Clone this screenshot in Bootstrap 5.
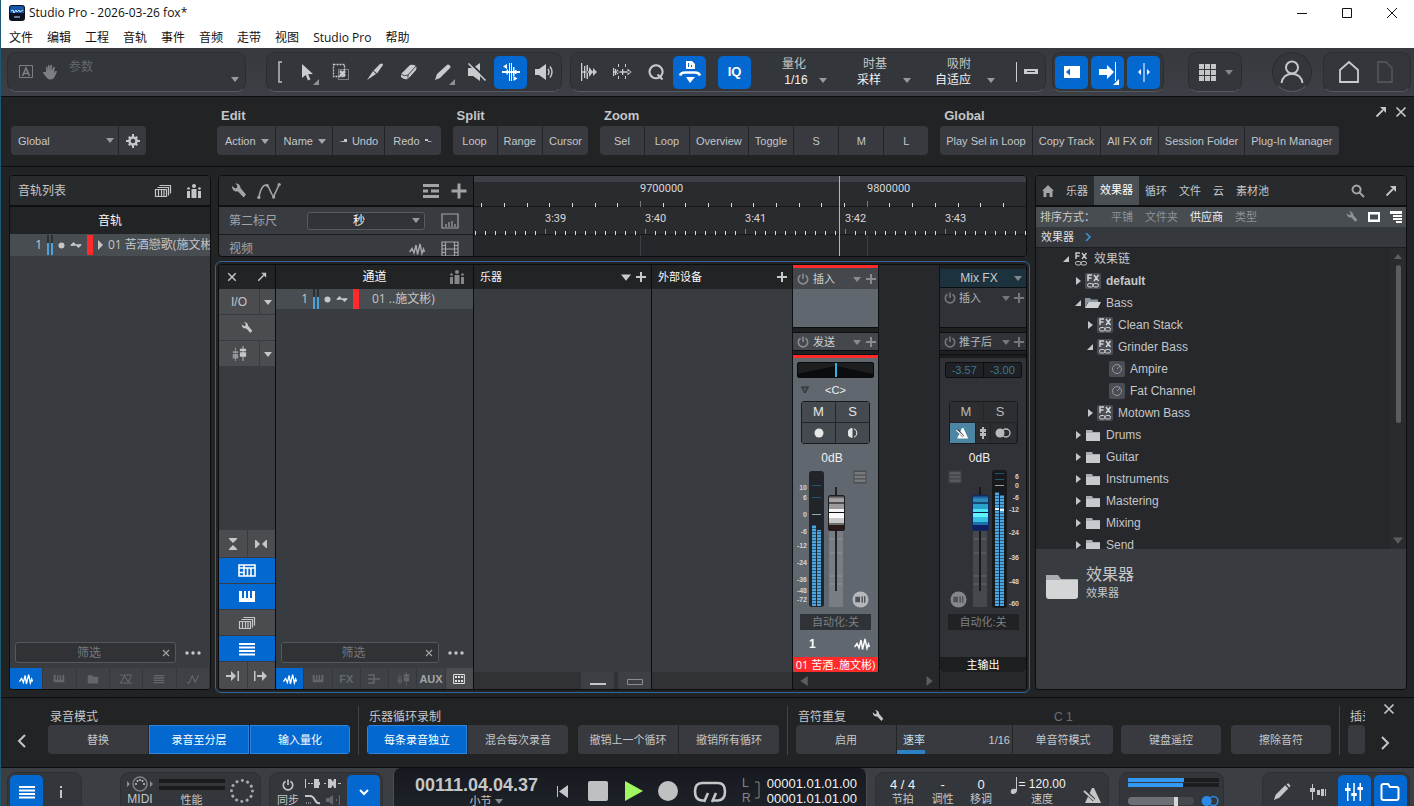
<!DOCTYPE html>
<html lang="zh-CN">
<head>
<meta charset="utf-8">
<meta name="viewport" content="width=device-width, initial-scale=1">
<title>Studio Pro - 2026-03-26 fox*</title>
<link href="https://cdn.jsdelivr.net/npm/bootstrap@5.3.0/dist/css/bootstrap.min.css" rel="stylesheet">
<style>
:root{--blue:#0369d0;--dark:#212325;--panel:#383b40;--bar:#3b3e43;--row:#484d51;--deep:#27282c;--line:#0c0d0f;--txt:#c4c6c8;--dim:#84888c;--red:#ff2a2a}
body{font:12px/16px "Liberation Sans","Noto Sans CJK SC",sans-serif;color:var(--txt);background:var(--dark)}
.app{height:100vh;overflow:hidden;border-left:1px solid #1d5874}
svg{display:block;flex:none;fill:currentColor}
.s8{width:8px;height:8px}.s10{width:10px;height:10px}.s12{width:12px;height:12px}.s14{width:14px;height:14px}.s16{width:16px;height:16px}.s18{width:18px;height:18px}.s20{width:20px;height:20px}.s24{width:24px;height:24px}.s28{width:28px;height:28px}
.segoe{font-family:"Open Sans","Noto Sans CJK SC",sans-serif}
.f11{font-size:11px}
.gl-6{margin-left:6px}.gl-10{margin-left:10px}.gl-12{margin-left:12px}.gl-14{margin-left:14px}.gl-20{margin-left:20px}.gl-30{margin-left:30px}.gl-38{margin-left:38px}.gl-71{margin-left:71px}
.c-dim{color:#84888c}.c-mid{color:#a2a5a8}.c-soft{color:#c8cacc}.c-sky{color:#2b8ae6}
button{color:inherit;background:none;border:0;padding:0;font:inherit;display:inline-flex;align-items:center;justify-content:center;line-height:16px}
select,input[type=text]{font:inherit;color:inherit;background-color:transparent;border:0;appearance:none;outline:0;padding:0}
option{color:#222}
.arrow-down{background-image:url("data:image/svg+xml,%3Csvg xmlns='http://www.w3.org/2000/svg' width='8' height='5'%3E%3Cpath d='M0 0h8L4 5z' fill='%23989b9e'/%3E%3C/svg%3E");background-repeat:no-repeat;background-position:right 4px center}
/* window frame */
.titlebar{background:#fff;color:#111;height:25px;padding-left:8px}
.winbtn{width:45px;height:25px}
.menubar{background:#fff;color:#111;height:23px;padding:3px 0 0 8px;gap:14px}
.menubar a{color:inherit;text-decoration:none}
/* toolbar */
.toolbar{height:49px;background:linear-gradient(#37393e,#3c3f45);border-bottom:1px solid var(--line);padding:0 3px 0 6px}
.well{background:#33363a;border:1px solid #2b2d31;border-bottom-color:#565a5f;border-radius:9px;height:40px}
.tool{width:34px;height:33px;position:relative;color:#c9cbcd}
.tool.on,.key-on{background:var(--blue);color:#fff;border-radius:5px}
.tool.on{width:33px}
.tool .corner{position:absolute;right:4px;bottom:3px}
.tool.wide{width:38px;margin-left:10px}
.tool.iq{margin-left:12px;font-size:13px}
.params{width:239px;padding:0 6px 0 10px;color:#7b7f83}
.params select{width:170px;height:34px;background-position:right 0 top 22px;padding:0 0 10px;color:#63676b}
.drop{margin-left:16px}
.drop select{width:68px;text-align-last:center;color:#f2f2f2;height:16px;padding-right:20px;display:block;background-position:right 2px center}
.drop span{display:block;width:68px;padding-right:8px;text-align:center}
.drop.narrow{margin-left:22px}
.drop.narrow select{width:56px;padding-right:10px}
.drop.narrow span{width:56px;padding-right:14px}
.trio{padding:0 3px 0 2px;gap:3px}
.round{width:40px;border-radius:50%}
.homes{width:88px;margin-left:11px}
/* macros */
.macros{height:69px;padding:9px 7px 0 10px;background:var(--dark)}
.macros h2,.rec h2{margin:0;font-size:13px;line-height:20px;font-weight:bold;padding-left:4px;height:20px}
.keys{display:flex;gap:1px;border-radius:4px;overflow:hidden}
.keys>*{background-color:#383a3f;height:29px}
.keys button{min-width:44px;padding:0 6px;font-size:11px;gap:5px;white-space:nowrap}
.keys button.has-caret{padding:0 6px 0 8px}
.keys button.gear{min-width:27px;padding:0}
.keys.first{margin-top:20px}
.keys .pages{width:107px;font-size:11px;padding-left:7px}
/* panels */
.stage{border-top:1px solid var(--line);padding:8px 7px 4px 8px;min-height:0}
.pane{border:1px solid var(--line);border-radius:4px;overflow:hidden;background:var(--panel)}
.tracks{width:202px;margin-bottom:3px}
.head{height:31px;background:#282b2e;border-bottom:2px solid #0f1012}
.sub{height:27px;background:var(--dark)}
.trk{height:22px;background:var(--row);gap:5px;white-space:nowrap;overflow:hidden}
.trk.short{height:20px}
.trk>*{flex:none}
.trk .num{width:32px;text-align:right}
.tag{width:6px;height:20px;background:var(--red)}
.find{height:21px;border:1px solid #54575b;border-radius:3px;background:#303236;color:#7d8185;padding-right:5px;min-width:0}
.find input{min-width:0;width:10px;flex:1;text-align:center}
.find input::placeholder{color:#74787c;opacity:1}
.findrow{padding:0 9px 5px 5px;gap:9px}
.tabs6>*{flex:1 1 0;height:21px;background:#3e4146;border-right:1px solid #34373b;color:#63676b;font-size:11px}
.tabs6>.key-on{background:var(--blue);color:#fff;border-radius:0}
.tabs6>.aux{color:#a2a5a8}
.tabs6>.lastkey{border:0;background:#4a4c50;color:#e0e0e0}
.centre{min-width:0}
.arrange{height:82px;margin:0 8px 0 7px}
.arrhead{width:255px;border-right:1px solid var(--line)}
.arrhead .head{padding:0 5px 0 12px}
.arrow2{height:28px;padding:0 14px 0 10px;border-bottom:1px solid #1b1c1f;gap:16px}
.unit{width:118px;height:18px;background-color:#303337!important;border:1px solid #575b5f!important;border-radius:3px;text-align-last:center;padding-right:14px!important}
.ruler{background:linear-gradient(#3c4046 0 6px,#2a2b2f 6px);min-width:0}
.ruler svg text{font:11px "Roboto","Liberation Sans",sans-serif;fill:#d8d9da}
.mixwrap{border:1px solid #2f6696;border-radius:6px;padding:2px;margin:4px 5px 0 4px;min-height:0}
.mix{background:var(--line);gap:1px}
.side{width:56px;background:#383b40}
.mixhead{height:24px;background:var(--dark)}
.side .cell{height:25px;background:#4a4c50;margin-bottom:1px}
.side .cell.key-on,.cells>.key-on{background:var(--blue);border-radius:0}
.cells{display:flex;gap:1px;margin-bottom:1px}
.cells>*{height:25px;background:#4a4c50}
.cells.tall>*{height:27px}
.cells .mini{width:15px}
.chan{width:197px;background:var(--panel)}
.inst{width:177px;background:var(--panel)}
.ext{width:140px;background:var(--panel)}
.foot{height:17px;background:#303236;gap:4px}
.foot span{width:33px;height:17px;background:#3c3f43}
.strips{background:#27282c;min-width:0}
.strip{width:85px;outline:1px solid #101113}
.strip .slot{height:20px;padding:0 1px 0 4px;font-size:11px;color:#888c90;gap:4px}
.strip .slot span{color:#d0d2d4}
.strip .slot.tall{height:21px}.strip .slot.low{height:17px}
.lit{background:#60676f}.lit .slot{background:#44484c}
.space38{height:38px}.space19{height:19px}
.redbar{height:3px;background:var(--red)}
.redbar.off{background:#1b1c1e}
.sep{height:6px;background:#1f2022;border-top:1px solid #0d0e0f;border-bottom:1px solid #0d0e0f}
.sep.thin{height:5px}
.pan{display:block;width:77px;height:16px;margin:4px auto 0;border:1px solid #08090a;border-radius:2px;appearance:none;background:linear-gradient(168deg,#1d1e20 49%,#0b0c0d 50%) left/50% 100% no-repeat,linear-gradient(192deg,#1d1e20 49%,#0b0c0d 50%) right/50% 100% no-repeat}
.pan::-webkit-slider-thumb{appearance:none;width:2px;height:14px;background:#28b4e6}
.peaks{width:77px;height:16px;margin:4px auto 0;border:1px solid #0d0e0f;border-radius:2px;background:#1f2124;color:#3d7690;font-size:11px;line-height:14px}
.peaks span{width:50%;text-align:center}.peaks span+span{border-left:1px solid #0d0e0f}
.centretext{height:23px;color:#f0f0f0;font-size:11px}
.ms{width:69px;margin:0 auto;background:#232528;border:1px solid #1a1b1d;border-radius:3px;gap:1px;display:flex;flex-wrap:wrap}
.ms button{width:33px;height:20px;background:#454a50;color:#e6e6e6;font-size:13px}
.dimstrip .ms button{background:#2c2e32;color:#b8babc}
.dimstrip .ms .teal{background:#4c86a3;color:#fff;width:25px}
.dimstrip .ms .n14{width:14px}.dimstrip .ms .n25{width:25px}
.db{height:25px;padding:3px 7px 0 0;text-align:center;font-size:12px;line-height:22px;color:#f0f0f0}
.faderbox{position:relative;width:85px;height:140px}
.faderbox text{font:bold 7px "Liberation Sans",sans-serif;fill:#d0d2d4}
.fader{position:absolute;width:103px;height:17px;left:-8px;top:61px;margin:0;appearance:none;background:none;transform:rotate(-90deg)}
.fader::-webkit-slider-thumb{appearance:none;width:36px;height:17px;border:1px solid #1c1d1f;border-radius:2px;background:linear-gradient(90deg,#2b1818 0 5px,#6d6d6d 5px 7px,#c8c8c8 7px 12px,#fafafa 12px 17px,#111 17px 18px,#f4f4f4 18px 21px,#9b9b9b 21px 26px,#4e4e4e 26px 28px,#a5a5a5 28px 31px,#3a3a3a)}
.fader.master{left:-11px}
.fader.master::-webkit-slider-thumb{border-color:#102a66;background:linear-gradient(90deg,#101f62 0 5px,#1c70a8 5px 8px,#38c0e0 8px 13px,#5ff2ff 13px 17px,#08203a 17px 18px,#4fe4f4 18px 21px,#2aa0cd 21px 26px,#16496f 26px 28px,#2e8bbb 28px 31px,#15407a)}
.auto{width:71px;height:16px;margin:5px auto 0;background:#2f3236;color:#7c8084;font-size:11px;display:flex}
.dimstrip{width:86px;background:#303237}.dimstrip .auto{background:#212224}
.dimstrip .slot,.dimstrip .slot.low{color:#73777b;gap:3px}.dimstrip .slot span{color:#b5b7b9}
.mixfx{height:23px;background:#1c323e;border-top:4px solid #1f2022;border-bottom:1px solid #0d0e0f;padding:0 4px}
.name{height:15px;font-size:11px;color:#fff;background:var(--red);border-radius:0 0 4px 4px;white-space:nowrap}
.dimstrip .name{background:#1d1e20}
.scrollrow{height:17px;background:#27282c;color:#5b5d61;padding:0 6px}
/* browser */
.browser{width:372px;margin-bottom:3px;font-size:11px}
.browser .head{padding:0 9px 0 6px}
.browser .head a,.sortrow a{color:inherit;text-decoration:none}
.browser .head .cur{background:#4b5054;color:#fff;height:29px;line-height:29px;width:45px;text-align:center;margin-left:6px}
.sortrow{height:20px;background:var(--row);padding:0 4px;color:#8e9296}
.sortrow .picked{color:#f0f0f0}
.crumb{height:21px;background:#35383c;padding-left:5px;border-bottom:1px solid #1c1d1f;color:#e0e0e0}
.tree{background:var(--deep);height:301px;min-height:0;overflow:hidden;font-size:12px;line-height:12px}
.tree li{height:22px;gap:5px;display:flex;align-items:center}
.tree li>.s8{margin-right:-2px}
.l1{padding-left:26px}.l2{padding-left:38px}.l3{padding-left:50px}.l4{padding-left:73px}
.sbar{width:16px;background:#2a2b2e;padding:5px 0 4px;color:#5b5d61}
.thumb{width:5px;height:158px;border-radius:3px;background:#5b5d61}
.chip{background:#4a4e54;border-radius:2px;color:#d0d2d4}
.bigname{font-size:16px;line-height:20px}
/* recording */
.rec{height:70px;border-top:1px solid var(--line);background:var(--dark);padding:0 0 0 10px;overflow:hidden}
.rec h2{font-weight:normal;font-size:12px;padding-left:2px;height:19px;line-height:22px}
.rec .keys button{width:100px;flex:none}
.rec .keys .key-on{background:var(--blue);border-radius:0;border:1px solid #2d84dc}
.recbody{padding-top:8px;min-width:0}
.goleft{width:22px;height:86px;margin-right:15px}
.recend{width:49px;padding:5px 10px 0 0;gap:20px}
.rule{width:1px;height:49px;background:#414447;margin:0 8px}
.rep{width:76px}
.note{margin-left:170px;color:#6b6f73;line-height:22px;height:19px}
.cutoff{width:17px;overflow:hidden}
.rate{width:115px;position:relative;padding:0 2px 0 6px;color:#bfe0f5;font-size:11px}
.rate i{position:absolute;left:0;bottom:0;width:28px;height:4px;background:#2a81c4}
/* transport */
.transport{height:39px;overflow:hidden;border-top:1px solid var(--line);background:var(--bar);padding:0 4px 0 6px;align-items:flex-start}
.transport .well{height:50px;margin-top:4px;border-color:#2d2f33;align-items:flex-start;padding:2px;flex:none;display:flex;justify-content:space-between}
.transport .info{width:75px}.transport .perf{width:141px;padding:2px 4px}.transport .sync{width:114px}.transport .song{width:234px;padding:4px 6px 0 14px}.transport .out{width:105px;padding:5px 4px 0 8px;display:block}.transport .views{width:148px;gap:2px}
.tkey{width:33px;height:34px}
.screen{flex:1;min-width:0;height:50px;margin:0 8px 0 10px;padding-left:12px;background:linear-gradient(#16191f,#20242b);border:1px solid #4a4d52;border-radius:7px;border-top:0}
.screen>button{margin:13px 0 0 15px}
.screen>div{padding-top:7px}
.clock{font-size:18px;font-weight:bold;line-height:20px}
.beats{font-size:11px;line-height:12px;padding-left:20px}
.screen>.loc{margin-left:15px;line-height:15px;padding-top:8px}.loc b{font-weight:normal;font-size:13px;color:#f2f2f2}
.pair{text-align:center;line-height:15px}
.pair b{font-weight:normal;color:#f2f2f2;display:block;font-size:13px;white-space:nowrap}
.pair b.tempo{font-size:12px}
.pair span{font-size:11px;display:block}
.pair .midi{font-size:12px}
.powered{padding:4px 0 0 5px;gap:2px}
.load{width:66px;padding-top:4px;font-size:11px;line-height:15px;text-align:center}
.bar1{height:4px;background:#1b1c1e;margin-bottom:1px}.bar1 i{display:block;height:4px;background:#3399f5}
.load .bar1{margin-bottom:3px}
.vol{appearance:none;display:block;width:66px;height:8px;margin:0;border-radius:4px;background:linear-gradient(90deg,#6c7074 48px,#45484c 48px)}
.vol::-webkit-slider-thumb{appearance:none;width:4px;height:9px;background:#d8d8d8}
</style>
</head>
<body>
<svg class="d-none" aria-hidden="true">
<symbol id="caret" viewBox="0 0 8 8"><path d="M0 2h8L4 7z"/></symbol>
<symbol id="tri" viewBox="0 0 8 8"><path d="M2 0l5 4-5 4z"/></symbol>
<symbol id="open" viewBox="0 0 8 8"><path d="M7 1v6H1z"/></symbol>
<symbol id="up" viewBox="0 0 8 8"><path d="M4 1l4 5H0z"/></symbol>
<symbol id="lft" viewBox="0 0 8 8"><path d="M7 0v8L1 4z"/></symbol>
<symbol id="corner" viewBox="0 0 8 8"><path d="M7 1v6H1z" fill="#8d9094"/></symbol>
<symbol id="plus" viewBox="0 0 12 12"><path d="M5 1h2v4h4v2H7v4H5V7H1V5h4z"/></symbol>
<symbol id="x" viewBox="0 0 12 12"><path d="M1.500 1.500l9 9m0-9l-9 9" fill="none" stroke="currentColor" stroke-width="1.700"/></symbol>
<symbol id="pop" viewBox="0 0 12 12"><path d="M1.500 10.500L8 4" stroke="currentColor" stroke-width="1.800"/><path d="M5 1h6v6z"/></symbol>
<symbol id="wrench" viewBox="0 0 16 16"><path d="M1 3l3.200 2.500 2-1L6 2 4 .5C7 0 9.500 1.800 9.500 5l5.500 6.500-2.300 3L7 8.500C4 9 1 7.500 1 3z"/></symbol>
<symbol id="people" viewBox="0 0 16 16"><circle cx="8" cy="3" r="2"/><circle cx="2.500" cy="5.500" r="1.300"/><circle cx="13.500" cy="5.500" r="1.300"/><path d="M5.500 6h5v9h-5zM1 8h3v7H1zM12 8h3v7h-3z"/></symbol>
<symbol id="stack" viewBox="0 0 18 14"><path d="M1.500 5.500h11v7h-11zM4.500 6v6M7.500 6v6M10 6v6M3.500 3.500h11v8M5.500 1.500h11v8" fill="none" stroke="currentColor" stroke-width="1.200"/></symbol>
<symbol id="pulse" viewBox="0 0 16 14"><path d="M.5 10L3 6.500 5 11 7 3l1.500 9.500L11 2l2 9.500L14.500 7l1 3" fill="none" stroke="currentColor" stroke-width="1.500"/></symbol>
<symbol id="piano" viewBox="0 0 18 14"><path d="M1 1h3v7h2V1h2v7h2V1h2v7h2V1h3v11H1z"/></symbol>
<symbol id="folder" viewBox="0 0 16 14"><path d="M1 2h6l1 2h7v9H1z"/></symbol>
<symbol id="autom" viewBox="0 0 18 14"><path d="M1 2h16M1 12h16M2 12l5-9 5 8 4-8" fill="none" stroke="currentColor" stroke-width="1.300"/></symbol>
<symbol id="lines" viewBox="0 0 18 14"><path d="M1 1h16v2H1zM1 4.500h16v2H1zM1 8h16v2H1zM1 11.500h16v2H1z"/></symbol>
<symbol id="zig" viewBox="0 0 18 14"><path d="M1 12h3l4-9 4 8 4-9" fill="none" stroke="currentColor" stroke-width="1.400"/></symbol>
<symbol id="curve" viewBox="0 0 26 18"><path d="M2 16C4 5 8 1 11 3s3 8 7 12L24 2" fill="none" stroke="currentColor" stroke-width="1.700"/><circle cx="2" cy="16" r="1.800"/><circle cx="11" cy="3" r="1.600"/><circle cx="18" cy="15.500" r="1.800"/><circle cx="24" cy="2" r="1.800"/></symbol>
<symbol id="tlist" viewBox="0 0 18 14"><path d="M1 0h16v3H1zM1 5.500h5v3H1zM9 5.500h8v3H9zM1 11h16v3H1z"/></symbol>
<symbol id="meter" viewBox="0 0 6 20"><path fill="#2d3034" d="M0 0h2v20H0zM4 0h2v20H4z"/><path fill="#4ba3dc" d="M0 8h2v12H0zM4 8h2v12H4z"/></symbol>
<symbol id="dot" viewBox="0 0 7 7"><circle cx="3.500" cy="3.500" r="3"/></symbol>
<symbol id="mono" viewBox="0 0 12 8"><path d="M0 4.500L3.500 1 6 3.500 3 4.500zM6 4.500l3-1h3L8.500 7z"/><path d="M1 4h10" stroke="currentColor" stroke-width="1.400"/></symbol>
<symbol id="power" viewBox="0 0 12 12"><path d="M3.500 2.200a4.700 4.700 0 1 0 5 0M6 .5V6" fill="none" stroke="currentColor" stroke-width="1.600"/></symbol>
<symbol id="pencil" viewBox="0 0 20 20"><path d="M1 19l2-6L13.500 2.500l3.500 3.500L7 16.500zM15 1.500L17 .3 19.500 3 18 5z"/></symbol>
<symbol id="fx" viewBox="0 0 16 16"><path d="M3 8V2h4M3 5h3.500M9 2l4.500 6m0-6L9 8" fill="none" stroke="currentColor" stroke-width="1.500"/><rect x="2.500" y="10.500" width="5.500" height="3.500" rx="1.700" fill="none" stroke="currentColor"/><rect x="8" y="10.500" width="5.500" height="3.500" rx="1.700" fill="none" stroke="currentColor"/></symbol>
<symbol id="knob" viewBox="0 0 16 16"><circle cx="8" cy="8" r="4.500" fill="none" stroke="#94989c"/><path d="M8 8l3-3" stroke="#94989c"/></symbol>
<symbol id="fold" viewBox="0 0 16 14"><path d="M1 2h6l1 2h7v9H1z" fill="#a9adb1"/><path d="M1 5h14v8H1z" fill="#c7cacd"/></symbol>
<symbol id="foldopen" viewBox="0 0 16 14"><path d="M0 2h5l1 1.500h7V6H3l-3 6z" fill="#8c959d"/><path d="M3.500 6H16l-3 6H0z" fill="#d0d3d6"/></symbol>
<symbol id="metro" viewBox="0 0 20 18"><path d="M10 2h2l7 15H3z"/><path d="M3 5l9 9" stroke="#33363a" stroke-width="3.500"/><path d="M2 5l10 9" stroke="currentColor" stroke-width="1.800"/></symbol>
<symbol id="twofader" viewBox="0 0 18 18"><path d="M2 6h6v2H2zM2 9h6v5H2zM4.500 2h1v15h-1z" opacity=".6"/><path d="M10 3h7v3h-7zM10 7h7v5h-7zM13 0h1v17h-1z"/></symbol>
<symbol id="stereo" viewBox="0 0 16 12"><circle cx="5" cy="6" r="4.500"/><circle cx="11" cy="6" r="4" fill="none" stroke="currentColor" stroke-width="1.400"/></symbol>
<symbol id="listv" viewBox="0 0 14 14"><path d="M.5.500h13v13H.5z" fill="#4c4f53"/><path d="M1.500 2h11v2.500h-11zM1.500 5.700h11v2.500h-11zM1.500 9.500h11V12h-11z" fill="#777a7d"/></symbol>
<symbol id="tocircle" viewBox="0 0 18 18"><circle cx="9" cy="9" r="8.500"/><path d="M3.500 6h5v6h-5zM10 5.500h1.500v7H10zM12.700 5.500h1.500v7h-1.500z" fill="#4d5258"/></symbol>
</svg>

<div class="app d-flex flex-column">
<header class="titlebar d-flex align-items-center segoe">
 <svg class="s16" viewBox="0 0 16 16"><rect width="16" height="16" rx="3" fill="#0b1222"/><path d="M1 8V3q0-2 2-2h10q2 0 2 2v5z" fill="#1257a8"/><path d="M2 6l2-1 1 3 2-3 1 2 2-2 1 2 3-2M5 12h6" stroke="#cfe6ff" fill="none"/></svg>
 <span class="ms-1">Studio Pro - 2026-03-26 fox*</span>
 <div class="ms-auto d-flex">
  <button class="winbtn" aria-label="最小化"><svg class="s12" viewBox="0 0 12 12"><path d="M1 6h10v1H1z"/></svg></button>
  <button class="winbtn" aria-label="最大化"><svg class="s12" viewBox="0 0 12 12"><path d="M1.500 1.500h9v9h-9z" fill="none" stroke="currentColor"/></svg></button>
  <button class="winbtn" aria-label="关闭"><svg class="s12" viewBox="0 0 12 12"><path d="M1 1l10 10M11 1L1 11" stroke="currentColor"/></svg></button>
 </div>
</header>
<nav class="menubar d-flex align-items-center segoe">
 <a href="#">文件</a><a href="#">编辑</a><a href="#">工程</a><a href="#">音轨</a><a href="#">事件</a><a href="#">音频</a><a href="#">走带</a><a href="#">视图</a><a href="#">Studio Pro</a><a href="#">帮助</a>
</nav>

<div class="toolbar d-flex align-items-center">
 <div class="well params d-flex align-items-center">
  <svg class="s16" viewBox="0 0 16 16"><path d="M1.500 1.500h13v12h-13z" fill="none" stroke="currentColor"/><path d="M4.500 12L8 4l3.500 8M6 9.500h4" fill="none" stroke="currentColor" stroke-width="1.700"/></svg>
  <svg class="s16 ms-2" viewBox="0 0 16 16"><path d="M4 8V3q1-1 1.500 0L6 7V1.500q1-1 1.600 0V7l.8-6q1-.7 1.600.3L9.700 7l1.600-4q1-.6 1.500.4L12 9l1.500-2q1.500-.3 1.500.8L12 14q-4 3-7 0L1 9q0-1.500 1.500-1z"/></svg>
  <select class="arrow-down ms-auto" aria-label="参数"><option>参数</option></select>
 </div>
 <div class="well d-flex align-items-center gl-20">
  <svg width="23" height="26" viewBox="0 0 23 26"><path d="M15 3h-3v20h3" fill="none" stroke="#b9bbbe" stroke-width="1.500"/></svg>
  <button class="tool" aria-label="选择"><svg class="s20" viewBox="0 0 20 20"><path d="M5 2l11 10-5 .3 2.500 5-2.500 1.200L8.700 13 5 16z"/></svg><svg class="s8 corner"><use href="#corner"/></svg></button>
  <button class="tool" aria-label="范围"><svg class="s20" viewBox="0 0 20 20"><path d="M2.500 2.500h11v12h-11z" fill="none" stroke="currentColor" stroke-width="1.300" stroke-dasharray="2 1"/><path d="M7.500 7.500h10v10h-10z" fill="none" stroke="currentColor" stroke-dasharray="1 1"/><path d="M9 9l5 5m0-5l-5 5" stroke="currentColor" stroke-width="2.500"/></svg></button>
  <button class="tool" aria-label="切割"><svg class="s20" viewBox="0 0 20 20"><path d="M2 18L8 9l3 3zM8.500 8.500L15 2q3-1.500 3 1l-6 8.500z"/></svg></button>
  <button class="tool" aria-label="橡皮"><svg class="s20" viewBox="0 0 20 20"><path d="M2 12L11 3q3-1 6 1 1 2 0 4L9 17q-4 1-7-2z"/><path d="M2 12q3 3 7 1l8-9M9 13v4" fill="none" stroke="#45484c"/></svg></button>
  <button class="tool" aria-label="绘画"><svg class="s20" viewBox="0 0 20 20"><path d="M2 18l2-6L14.500 2.500q3 0 3 3L7 16z"/></svg><svg class="s8 corner"><use href="#corner"/></svg></button>
  <button class="tool" aria-label="静音"><svg class="s20" viewBox="0 0 20 20"><path d="M1 6h5l7-5v18l-7-5H1z"/><path d="M3 1l17 16" stroke="#33363a" stroke-width="2"/><path d="M1.500 1.500l17 17" stroke="currentColor" stroke-width="1.600"/></svg></button>
  <button class="tool on" aria-label="弯折"><svg class="s20" viewBox="0 0 20 20"><path d="M1 9h18v2H1zM8 1h1v18H8zM10 1h1v18h-1zM12 5h1.500v10H12zM14 8h1.500v4H14zM6 2v5L2 4.500zM12.500 14v5l4-2.500zM5.500 7.500H7v5H5.500z"/></svg></button>
  <button class="tool" aria-label="监听"><svg class="s20" viewBox="0 0 20 20"><path d="M1 7h4l7-5v16l-7-5H1z"/><path d="M14 7q2 3 0 6M16 4.500q4 5.500 0 11" fill="none" stroke="currentColor" stroke-width="1.400"/></svg></button>
 </div>
 <div class="well d-flex align-items-center ms-2">
  <button class="tool" aria-label="起始量化"><svg class="s20" viewBox="0 0 20 20"><path d="M3 1h1.300v18H3zM6 4h1.300v12H6zM8.500 3v14H10V3zM3 9.300h12v1.400H3zM11 5l4 5-4 5zM15 6l4 4-4 4z"/></svg></button>
  <button class="tool" aria-label="伸缩"><svg class="s20" viewBox="0 0 20 20"><path d="M2 9.300h16v1.400H2zM1 6h1.300v8H1zM3 7h1.300v6H3zM10 7h1.300v6H10zM19.500 10l-4-3.500v7zM8 10L5 7.500v5z"/><path d="M6.500 2v4m0 8v4M13.500 2v4m0 8v4" stroke="currentColor" stroke-dasharray="3 1"/></svg></button>
  <button class="tool" aria-label="量化"><svg class="s20" viewBox="0 0 20 20"><path d="M10 3.200a6.500 6.500 0 1 0 .1 0zM11.500 12.500l5 5" fill="none" stroke="currentColor" stroke-width="2"/></svg></button>
  <button class="tool on" aria-label="自动滚动"><svg class="s28" viewBox="0 0 28 28"><path d="M10 3h6l3 3v5h-9z"/><path d="M12 5h1v4h-1zM15 7h1v2h-1z" fill="#0369d0"/><path d="M4 17.500Q5 14.500 9 14.500H19Q23 14.500 24 17.500" fill="none" stroke="currentColor" stroke-width="2.600"/><path d="M10 19h9l-5 6z"/></svg></button>
  <button class="tool on iq fw-bold">IQ</button>
  <label class="drop narrow"><span>量化</span><select class="arrow-down"><option>1/16</option></select></label>
  <label class="drop"><span>时基</span><select class="arrow-down"><option>采样</option></select></label>
  <label class="drop"><span>吸附</span><select class="arrow-down"><option>自适应</option></select></label>
  <button class="tool wide" aria-label="插入"><svg class="s28" viewBox="0 0 28 28"><path d="M4 4h1v20H4zM12 11h14v5H12zM15 13v1h8v-1z" fill-rule="evenodd"/></svg></button>
 </div>
 <div class="well trio d-flex align-items-center gl-6">
  <button class="tool on" aria-label="光标"><svg class="s20" viewBox="0 0 20 20"><path d="M2 4h16v12H2zM8 6.500L4 10l4 3.500z" fill-rule="evenodd"/></svg></button>
  <button class="tool on" aria-label="跟随"><svg class="s20" viewBox="0 0 20 20"><path d="M1 7h8V3l7 7-7 7v-4H1zM17 0h1v19h-1z"/></svg><svg class="s8 corner" viewBox="0 0 8 8"><path d="M7 1v6H1z"/></svg></button>
  <button class="tool on" aria-label="居中"><svg class="s20" viewBox="0 0 20 20"><path d="M9.500 1h1v19h-1zM7 7v6l-3-3zM13 7v6l3-3z"/></svg></button>
 </div>
 <button class="well px-2 ms-auto gap-2" aria-label="面板"><svg class="s20" viewBox="0 0 20 20"><path d="M2 2h5v5H2zM8 2h5v5H8zM14 2h5v5h-5zM2 8h5v5H2zM8 8h5v5H8zM14 8h5v5h-5zM2 14h5v5H2zM8 14h5v5H8zM14 14h5v5h-5z"/></svg><svg class="s8 c-dim"><use href="#caret"/></svg></button>
 <button class="well round gl-30" aria-label="用户"><svg class="s24" viewBox="0 0 24 24"><circle cx="12" cy="7.500" r="6" fill="none" stroke="currentColor" stroke-width="2"/><path d="M1.500 23Q3 14 12 13.700 21 14 22.500 23" fill="none" stroke="currentColor" stroke-width="2"/></svg></button>
 <div class="well homes d-flex align-items-center justify-content-between px-2">
  <button class="tool" aria-label="起始页"><svg class="s24" viewBox="0 0 24 24"><path d="M3 10l9-8 9 8v12H3z" fill="none" stroke="currentColor" stroke-width="1.800"/></svg></button>
  <button class="tool" aria-label="文档"><svg class="s24" viewBox="0 0 24 24"><path d="M5 2h8l6 6v14H5z" fill="none" stroke="#4f5256" stroke-width="1.800"/></svg></button>
 </div>
</div>

<section class="macros d-flex align-items-start">
 <div class="keys first"><select class="arrow-down pages" aria-label="宏页面"><option>Global</option></select><button class="gear" aria-label="设置"><svg class="s14" viewBox="0 0 14 14"><path d="M6 0h2v14H6zM0 6h14v2H0z" /><path d="M2 3.500L3.500 2 12 10.500 10.500 12zM10.500 2L12 3.500 3.500 12 2 10.500z"/><circle cx="7" cy="7" r="3.600" fill="none" stroke="currentColor" stroke-width="2.500"/><circle cx="7" cy="7" r="2.300" fill="#383a3f"/></svg></button></div>
 <div class="gl-71"><h2>Edit</h2><div class="keys"><button class="has-caret">Action <svg class="s8 c-mid"><use href="#caret"/></svg></button><button class="has-caret">Name <svg class="s8 c-mid"><use href="#caret"/></svg></button><button><svg class="s8" viewBox="0 0 8 8"><path d="M0 5l4-1h4v1zM5 2h3v3H5z"/></svg>Undo</button><button class="px-2">Redo<svg class="s8" viewBox="0 0 8 8"><path d="M8 5L4 4H0v1zM0 2h3v3H0z"/></svg></button></div></div>
 <div class="gl-12"><h2>Split</h2><div class="keys"><button>Loop</button><button>Range</button><button>Cursor</button></div></div>
 <div class="gl-12"><h2>Zoom</h2><div class="keys"><button>Sel</button><button>Loop</button><button>Overview</button><button>Toggle</button><button>S</button><button>M</button><button>L</button></div></div>
 <div class="gl-12"><h2>Global</h2><div class="keys"><button>Play Sel in Loop</button><button>Copy Track</button><button>All FX off</button><button>Session Folder</button><button>Plug-In Manager</button></div></div>
 <div class="ms-auto d-flex gap-2"><button aria-label="弹出"><svg class="s12"><use href="#pop"/></svg></button><button aria-label="关闭宏"><svg class="s12"><use href="#x"/></svg></button></div>
</section>

<main class="stage d-flex flex-grow-1">
 <section class="pane tracks d-flex flex-column flex-shrink-0">
  <div class="head d-flex align-items-center px-2"><span>音轨列表</span><svg class="s18 ms-auto"><use href="#stack"/></svg><svg class="s16 gl-14"><use href="#people"/></svg></div>
  <div class="sub d-flex align-items-center justify-content-center text-light">音轨</div>
  <div class="trk d-flex align-items-center segoe"><span class="num">1</span><svg width="6" height="20"><use href="#meter"/></svg><svg width="7" height="7"><use href="#dot"/></svg><svg width="12" height="8"><use href="#mono"/></svg><span class="tag"></span><svg width="5" height="10" viewBox="0 0 5 10"><path d="M0 0l5 5-5 5z"/></svg><span>01 苦酒戀歌(施文彬)</span></div>
  <div class="findrow mt-auto d-flex align-items-center"><label class="find d-flex align-items-center flex-grow-1"><input type="text" placeholder="筛选" aria-label="筛选音轨"><svg class="s8 c-mid"><use href="#x"/></svg></label><svg width="16" height="4" viewBox="0 0 16 4"><circle cx="2" cy="2" r="1.700"/><circle cx="8" cy="2" r="1.700"/><circle cx="14" cy="2" r="1.700"/></svg></div>
  <div class="tabs6 d-flex"><button class="key-on" aria-label="音频"><svg class="s14"><use href="#pulse"/></svg></button><button aria-label="乐器"><svg class="s12"><use href="#piano"/></svg></button><button aria-label="文件夹"><svg class="s12"><use href="#folder"/></svg></button><button aria-label="自动化"><svg class="s14"><use href="#autom"/></svg></button><button aria-label="列表"><svg class="s12"><use href="#lines"/></svg></button><button aria-label="包络"><svg class="s14"><use href="#zig"/></svg></button></div>
 </section>

 <div class="centre d-flex flex-column flex-grow-1">
  <section class="pane arrange d-flex flex-shrink-0">
   <div class="arrhead flex-shrink-0">
    <div class="head d-flex align-items-center c-mid"><svg class="s16"><use href="#wrench"/></svg><svg width="24" height="18" class="gl-10"><use href="#curve"/></svg><svg class="s18 ms-auto"><use href="#tlist"/></svg><svg class="s18 gl-10"><use href="#plus"/></svg></div>
    <div class="arrow2 d-flex align-items-center c-mid"><label for="unit">第二标尺</label><select id="unit" class="unit arrow-down ms-auto text-light"><option>秒</option></select><svg width="18" height="16" viewBox="0 0 18 16"><path d="M1 1h16v14H1zM5 14v-3M8 14V9M11 14V8M14 14v-3" fill="none" stroke="currentColor" stroke-width="1.200"/></svg></div>
    <div class="arrow2 d-flex align-items-center border-0 c-mid"><span>视频</span><svg class="s16 ms-auto"><use href="#pulse"/></svg><svg width="18" height="16" viewBox="0 0 18 16"><path d="M1 1h16v14H1zM4.500 1v14M13.500 1v14M4.500 8h9M1 4.500h3M1 8h3M1 11.500h3M14 4.500h3M14 8h3M14 11.500h3" fill="none" stroke="currentColor" stroke-width="1.200"/></svg></div>
   </div>
   <div class="ruler flex-grow-1"><svg id="timeline" width="100%" height="80" role="img" aria-label="时间标尺"></svg></div>
  </section>

  <section class="mixwrap flex-grow-1 d-flex">
   <div class="pane mix d-flex flex-grow-1">
    <div class="side d-flex flex-column flex-shrink-0">
     <div class="mixhead d-flex align-items-center justify-content-between px-2 flex-shrink-0"><button aria-label="关闭混音器"><svg class="s10"><use href="#x"/></svg></button><button aria-label="弹出混音器"><svg class="s10"><use href="#pop"/></svg></button></div>
     <div class="cells"><button class="flex-grow-1">I/O</button><button class="mini" aria-label="I/O 菜单"><svg class="s8"><use href="#caret"/></svg></button></div>
     <button class="cell" aria-label="设置"><svg class="s12"><use href="#wrench"/></svg></button>
     <div class="cells"><button class="flex-grow-1" aria-label="推子"><svg class="s16"><use href="#twofader"/></svg></button><button class="mini" aria-label="推子菜单"><svg class="s8"><use href="#caret"/></svg></button></div>
     <div class="cells tall mt-auto"><button class="flex-fill" aria-label="垂直"><svg class="s14" viewBox="0 0 14 14"><path d="M3 1h8v1L7 6 3 2zM3 13h8v-1L7 8l-4 4z"/></svg></button><button class="flex-fill" aria-label="水平"><svg class="s14" viewBox="0 0 14 14"><path d="M1 3h1l4 4-4 4H1zM13 3h-1L8 7l4 4h1z"/></svg></button></div>
     <button class="cell key-on" aria-label="控制台"><svg width="18" height="14" viewBox="0 0 18 14"><path d="M1 1h16v11H1zM6 1v11M1 4h16M9.500 4v8M13 4v8M1 8.500h5" fill="none" stroke="currentColor" stroke-width="1.600"/></svg></button>
     <button class="cell key-on" aria-label="键盘"><svg width="18" height="14"><use href="#piano"/></svg></button>
     <button class="cell" aria-label="分组"><svg width="18" height="14"><use href="#stack"/></svg></button>
     <button class="cell key-on" aria-label="列表"><svg width="18" height="14"><use href="#lines"/></svg></button>
     <div class="cells tall mb-0"><button class="flex-fill" aria-label="左收"><svg class="s14" viewBox="0 0 14 14"><path d="M0 6h5V2l5 5-5 5V8H0zM11.500 2H13v10h-1.500z"/></svg></button><button class="flex-fill" aria-label="右展"><svg class="s14" viewBox="0 0 14 14"><path d="M3 6h5V2l5 5-5 5V8H3zM0 2h1.500v10H0z"/></svg></button></div>
    </div>
    <div class="chan d-flex flex-column flex-shrink-0">
     <div class="mixhead d-flex align-items-center text-light"><span class="flex-grow-1 text-center ps-4">通道</span><svg class="s16 me-2 c-dim"><use href="#people"/></svg></div>
     <div class="trk short d-flex align-items-center segoe"><span class="num">1</span><svg width="6" height="20"><use href="#meter"/></svg><svg width="7" height="7"><use href="#dot"/></svg><svg width="12" height="8"><use href="#mono"/></svg><span class="tag"></span><span class="ps-2">01 ..施文彬)</span></div>
     <div class="findrow mt-auto d-flex align-items-center"><label class="find d-flex align-items-center flex-grow-1"><input type="text" placeholder="筛选" aria-label="筛选通道"><svg class="s8 c-mid"><use href="#x"/></svg></label><svg width="16" height="4" viewBox="0 0 16 4"><circle cx="2" cy="2" r="1.700"/><circle cx="8" cy="2" r="1.700"/><circle cx="14" cy="2" r="1.700"/></svg></div>
     <div class="tabs6 d-flex"><button class="key-on" aria-label="音频"><svg class="s14"><use href="#pulse"/></svg></button><button aria-label="乐器"><svg class="s12"><use href="#piano"/></svg></button><button class="fw-bold">FX</button><button aria-label="总线"><svg class="s12" viewBox="0 0 12 12"><path d="M0 2h6v8H0M0 6h12" fill="none" stroke="currentColor" stroke-width="1.500"/></svg></button><button aria-label="VCA"><svg class="s14"><use href="#twofader"/></svg></button><button class="fw-bold aux">AUX</button><button class="lastkey" aria-label="网格"><svg class="s12" viewBox="0 0 12 12"><path d="M.6 1.500h10.800v9H.6z" fill="none" stroke="currentColor"/><path d="M2 3h2v2H2zM5 3h2v2H5zM8 3h2v2H8zM2 7h2v2H2zM5 7h2v2H5zM8 7h2v2H8z"/></svg></button></div>
    </div>
    <div class="inst d-flex flex-column flex-shrink-0">
     <div class="mixhead d-flex align-items-center text-light f11"><span class="gl-6">乐器</span><svg class="s10 ms-auto me-1 c-soft"><use href="#caret"/></svg><button class="me-1 c-soft" aria-label="添加乐器"><svg class="s12"><use href="#plus"/></svg></button></div>
     <div class="foot mt-auto d-flex justify-content-end"><span class="d-flex align-items-end justify-content-center pb-1"><svg width="16" height="2"><path d="M0 0h16v2H0z"/></svg></span><span class="d-flex align-items-end justify-content-center pb-1"><svg width="16" height="6"><path d="M.5.5h15v5H.5z" fill="none" stroke="#8a8d91"/></svg></span></div>
    </div>
    <div class="ext d-flex flex-column flex-shrink-0">
     <div class="mixhead d-flex align-items-center text-light f11"><span class="gl-6">外部设备</span><button class="ms-auto me-1 c-soft" aria-label="添加设备"><svg class="s12"><use href="#plus"/></svg></button></div>
     <div class="foot mt-auto"></div>
    </div>
    <div class="strips d-flex flex-grow-1">
     <div class="d-flex flex-column flex-grow-1">
      <div class="strip lit flex-grow-1 d-flex flex-column">
       <div class="redbar"></div>
       <div class="slot tall d-flex align-items-center"><svg class="s12"><use href="#power"/></svg><span>插入</span><svg class="s8 ms-auto"><use href="#caret"/></svg><svg class="s12"><use href="#plus"/></svg></div>
       <div class="space38"></div><div class="sep"></div>
       <div class="slot low d-flex align-items-center"><svg class="s12"><use href="#power"/></svg><span>发送</span><svg class="s8 ms-auto"><use href="#caret"/></svg><svg class="s12"><use href="#plus"/></svg></div>
       <div class="sep thin"></div><div class="redbar"></div>
       <input class="pan" type="range" aria-label="声像" value="50">
       <div class="centretext d-flex align-items-center px-1"><svg class="s8 ms-1" viewBox="0 0 8 8"><path d="M.5 1h7L4 7z" fill="#51565c" stroke="#2a2c30"/></svg><span class="flex-grow-1 text-center pe-2 me-1">&lt;C&gt;</span></div>
       <div class="ms"><button>M</button><button>S</button><button aria-label="录音"><svg class="s10" viewBox="0 0 10 10"><circle cx="5" cy="5" r="4.500"/></svg></button><button aria-label="监听"><svg class="s10" viewBox="0 0 10 10"><path d="M4.500 0v10a5 5 0 0 1 0-10z"/><path d="M6 .8a4.500 4.500 0 0 1 0 8.400" fill="none" stroke="currentColor"/></svg></button></div>
       <div class="db">0dB</div>
       <div class="faderbox"><svg width="85" height="140" viewBox="0 0 85 140">
        <defs><pattern id="led" width="4" height="3" patternUnits="userSpaceOnUse"><path d="M0 0h4v2H0z" fill="#4aa6e2"/><path d="M0 2h4v1H0z" fill="#2b5f84"/></pattern></defs>
        <rect x="16" y="2" width="15" height="136" rx="3" fill="#212428"/><path d="M19 16h9v1h-9zM19 28h9v1h-9z" fill="#24546e"/><path d="M19 45h9v1h-9z" fill="#8fa6ac"/>
        <path d="M19 56h4v81h-4zM24 61h4v76h-4z" fill="url(#led)"/>
        <path d="M36 62h14v76H36z" fill="#787d84"/><path d="M37 70h12M37 84h12M37 107h12M37 115h12" stroke="#8e9398"/><path d="M42 18h2v104h-2z" fill="#202225"/>
        <g text-anchor="end"><text x="14" y="21">10</text><text x="14" y="31">6</text><text x="14" y="48">0</text><text x="14" y="65">-6</text><text x="14" y="79">-12</text><text x="14" y="96">-24</text><text x="14" y="113">-36</text><text x="14" y="124">-48</text><text x="14" y="133">-72</text></g>
        <use href="#listv" x="60" y="1" width="14" height="14"/><use href="#tocircle" x="59" y="122" width="17" height="17" color="#b5b8bb"/>
       </svg><input class="fader" type="range" value="88" aria-label="通道音量"></div>
       <button class="auto flex-shrink-0">自动化:关</button>
       <div class="d-flex align-items-center justify-content-between flex-grow-1 ps-3 text-light fw-bold"><span>1</span><svg class="s16 me-2"><use href="#pulse"/></svg></div>
       <div class="name d-flex align-items-center justify-content-center segoe">01 苦酒..施文彬)</div>
      </div>
      <div class="scrollrow d-flex align-items-center justify-content-between"><svg class="s10"><use href="#lft"/></svg><svg class="s10"><use href="#tri"/></svg></div>
     </div>
     <div class="strip dimstrip d-flex flex-column flex-shrink-0">
       <div class="mixfx d-flex align-items-center c-soft"><span class="flex-grow-1 text-center">Mix FX</span><svg class="s8 c-dim"><use href="#caret"/></svg></div>
       <div class="slot d-flex align-items-center"><svg class="s12"><use href="#power"/></svg><span>插入</span><svg class="s8 ms-auto"><use href="#caret"/></svg><svg class="s12"><use href="#plus"/></svg></div>
       <div class="space19"></div><div class="sep"></div>
       <div class="slot low d-flex align-items-center"><svg class="s12"><use href="#power"/></svg><span>推子后</span><svg class="s8 ms-auto"><use href="#caret"/></svg><svg class="s12"><use href="#plus"/></svg></div>
       <div class="sep thin"></div><div class="redbar off"></div>
       <div class="peaks d-flex"><span>-3.57</span><span>-3.00</span></div>
       <div class="centretext"></div>
       <div class="ms"><button>M</button><button>S</button><button class="teal" aria-label="节拍器"><svg class="s14"><use href="#metro"/></svg></button><button class="n14" aria-label="推子"><svg width="8" height="12" viewBox="0 0 8 12"><path d="M1 2h6v3H1zM1 6h6v3H1zM3 0h2v12H3z"/></svg></button><button class="n25" aria-label="立体声"><svg class="s16"><use href="#stereo"/></svg></button></div>
       <div class="db">0dB</div>
       <div class="faderbox"><svg width="86" height="140" viewBox="0 0 86 140">
        <rect x="52" y="1" width="15" height="138" rx="3" fill="#17191b"/><path d="M55 4h9v1h-9zM55 10h9v1h-9z" fill="#24546e"/><path d="M55 16h9v1h-9z" fill="#8fa6ac"/>
        <path d="M55 23h4v114h-4zM60 26h4v111h-4z" fill="url(#led)"/><path d="M55 39h4v2h-4zM60 40h4v2h-4z" fill="#e8f4fb"/>
        <path d="M33 62h14v76H33z" fill="#45484c"/><path d="M34 70h12M34 84h12M34 107h12M34 115h12" stroke="#676a6e"/><path d="M39 18h2v104h-2z" fill="#191a1c"/>
        <g text-anchor="end"><text x="79" y="10">6</text><text x="79" y="19">0</text><text x="79" y="31">-6</text><text x="79" y="43">-12</text><text x="79" y="66">-24</text><text x="79" y="91">-36</text><text x="79" y="115">-48</text><text x="79" y="137">-60</text></g>
        <g opacity=".55"><use href="#listv" x="8" y="1" width="14" height="14"/></g><use href="#tocircle" x="10" y="122" width="17" height="17" color="#85888b"/>
       </svg><input class="fader master" type="range" value="88" aria-label="主音量"></div>
       <button class="auto flex-shrink-0">自动化:关</button>
       <div class="flex-grow-1"></div>
       <div class="name d-flex align-items-center justify-content-center">主输出</div>
       <div class="scrollrow"></div>
     </div>
    </div>
   </div>
  </section>
 </div>

 <aside class="pane browser d-flex flex-column flex-shrink-0">
  <div class="head d-flex align-items-center flex-shrink-0"><svg class="s12 c-mid" viewBox="0 0 12 12"><path d="M6 0l6 6h-1.500v6H7.500V8h-3v4H1.500V6H0z"/></svg><a href="#" class="gl-12">乐器</a><a href="#" class="cur">效果器</a><a href="#" class="gl-6">循环</a><a href="#" class="gl-12">文件</a><a href="#" class="gl-12">云</a><a href="#" class="gl-12">素材池</a>
   <svg class="s14 ms-auto c-mid" viewBox="0 0 14 14"><path d="M5.500 1.500a4 4 0 1 0 .1 0zM8.500 8.500L13 13" fill="none" stroke="currentColor" stroke-width="1.900"/></svg><svg class="s12 gl-20"><use href="#pop"/></svg></div>
  <div class="sortrow d-flex align-items-center flex-shrink-0"><span class="c-soft">排序方式：</span><a href="#" class="ms-3">平铺</a><a href="#" class="gl-12">文件夹</a><a href="#" class="gl-12 picked">供应商</a><a href="#" class="gl-12">类型</a><svg class="s12 ms-auto"><use href="#wrench"/></svg><svg class="gl-10" width="12" height="12" viewBox="0 0 12 12"><path d="M0 1h12v10H0zM2 3.500v5h8v-5z" fill="#fff" fill-rule="evenodd"/></svg><svg class="gl-10" width="12" height="12" viewBox="0 0 12 12"><path d="M0 0h12v3H0zM3 4h9v2H3zM3 7h9v2H3zM6 10h6v2H6z" fill="#fff"/></svg></div>
  <div class="crumb d-flex align-items-center flex-shrink-0"><span>效果器</span><svg class="s8 gl-10" viewBox="0 0 8 8"><path d="M2 0l4 4-4 4" fill="none" stroke="#3a96dc" stroke-width="1.500"/></svg></div>
  <div class="tree d-flex flex-shrink-1">
   <ul class="list-unstyled m-0 flex-grow-1">
    <li class="l1"><svg class="s8"><use href="#open"/></svg><svg class="s16"><use href="#fx"/></svg><span>效果链</span></li>
    <li class="l2"><svg class="s8"><use href="#tri"/></svg><svg class="s16 chip"><use href="#fx"/></svg><b>default</b></li>
    <li class="l2"><svg class="s8"><use href="#open"/></svg><svg class="s16"><use href="#foldopen"/></svg><span>Bass</span></li>
    <li class="l3"><svg class="s8"><use href="#tri"/></svg><svg class="s16 chip"><use href="#fx"/></svg><span>Clean Stack</span></li>
    <li class="l3"><svg class="s8"><use href="#open"/></svg><svg class="s16 chip"><use href="#fx"/></svg><span>Grinder Bass</span></li>
    <li class="l4"><svg class="s16 chip"><use href="#knob"/></svg><span>Ampire</span></li>
    <li class="l4"><svg class="s16 chip"><use href="#knob"/></svg><span>Fat Channel</span></li>
    <li class="l3"><svg class="s8"><use href="#tri"/></svg><svg class="s16 chip"><use href="#fx"/></svg><span>Motown Bass</span></li>
    <li class="l2"><svg class="s8"><use href="#tri"/></svg><svg class="s16"><use href="#fold"/></svg><span>Drums</span></li>
    <li class="l2"><svg class="s8"><use href="#tri"/></svg><svg class="s16"><use href="#fold"/></svg><span>Guitar</span></li>
    <li class="l2"><svg class="s8"><use href="#tri"/></svg><svg class="s16"><use href="#fold"/></svg><span>Instruments</span></li>
    <li class="l2"><svg class="s8"><use href="#tri"/></svg><svg class="s16"><use href="#fold"/></svg><span>Mastering</span></li>
    <li class="l2"><svg class="s8"><use href="#tri"/></svg><svg class="s16"><use href="#fold"/></svg><span>Mixing</span></li>
    <li class="l2"><svg class="s8"><use href="#tri"/></svg><svg class="s16"><use href="#fold"/></svg><span>Send</span></li>
   </ul>
   <div class="sbar d-flex flex-column align-items-center"><svg class="s8"><use href="#up"/></svg><div class="thumb mt-1"></div><svg class="s10 mt-auto"><use href="#caret"/></svg></div>
  </div>
  <div class="d-flex align-items-start flex-grow-1 pt-3 ps-2"><svg width="36" height="30" viewBox="0 0 36 30" class="mt-2"><path d="M2 2h12l3 4h17v4H2z" fill="#a9acb0"/><path d="M2 7h32v16q0 3-3 3H5q-3 0-3-3z" fill="#d3d5d7"/></svg><div class="gl-6"><div class="bigname">效果器</div><div>效果器</div></div></div>
 </aside>
</main>

<section class="rec d-flex flex-shrink-0">
 <button class="goleft" aria-label="向左"><svg class="s16" viewBox="0 0 16 16"><path d="M11 2L5 8l6 6" fill="none" stroke="currentColor" stroke-width="2"/></svg></button>
 <div class="recbody d-flex flex-grow-1 overflow-hidden">
  <div class="flex-shrink-0"><h2>录音模式</h2><div class="keys"><button>替换</button><button class="key-on">录音至分层</button><button class="key-on">输入量化</button></div></div>
  <div class="rule flex-shrink-0"></div>
  <div class="flex-shrink-0"><h2>乐器循环录制</h2><div class="d-flex"><div class="keys"><button class="key-on">每条录音独立</button><button>混合每次录音</button></div><div class="keys gl-10"><button>撤销上一个循环</button><button>撤销所有循环</button></div></div></div>
  <div class="rule flex-shrink-0"></div>
  <div class="flex-shrink-0"><div class="d-flex"><h2 class="rep">音符重复</h2><svg class="s12 mt-1"><use href="#wrench"/></svg><span class="note">C 1</span></div><div class="d-flex"><div class="keys"><button>启用</button><div class="rate d-flex align-items-center justify-content-between"><span>速率</span><span class="c-soft">1/16</span><i></i></div><button>单音符模式</button></div><div class="keys ms-2"><button>键盘遥控</button></div><div class="keys gl-10"><button>擦除音符</button></div></div></div>
  <div class="rule flex-shrink-0"></div>
  <div class="cutoff flex-shrink-0"><h2 class="text-nowrap">插录</h2><div class="keys"><button aria-label="插录"></button></div></div>
 </div>
 <div class="recend d-flex flex-column align-items-center"><button class="ms-2" aria-label="关闭"><svg class="s12"><use href="#x"/></svg></button><button aria-label="向右"><svg class="s16" viewBox="0 0 16 16"><path d="M5 2l6 6-6 6" fill="none" stroke="currentColor" stroke-width="2"/></svg></button></div>
</section>

<footer class="transport d-flex flex-shrink-0">
 <div class="well info"><button class="tkey key-on" aria-label="轨道"><svg class="s18"><use href="#lines"/></svg></button><button class="tkey flex-grow-1" aria-label="信息"><svg width="4" height="12"><path d="M1 0h2v2H1zM1 4h2v8H1z"/></svg></button></div>
 <div class="well perf gl-38">
  <div class="pair"><svg width="30" height="17" viewBox="0 0 30 17"><circle cx="15" cy="9" r="7" fill="none" stroke="#7d8185" stroke-width="1.500"/><circle cx="11" cy="9" r="1"/><circle cx="12.500" cy="6" r="1"/><circle cx="15" cy="5" r="1"/><circle cx="17.500" cy="6" r="1"/><circle cx="19" cy="9" r="1"/><path d="M2 6l3 3-3 3zM25 6l3 3-3 3z" fill="#8a8d91"/></svg><span class="midi">MIDI</span></div>
  <div class="load"><div class="bar1"></div><div class="bar1"></div>性能</div>
  <svg class="s28" viewBox="0 0 28 28"><circle cx="14" cy="16" r="10.500" fill="none" stroke="#a8abae" stroke-width="3" stroke-dasharray="0.100 5.400" stroke-linecap="round"/></svg>
 </div>
 <div class="well sync ms-2">
  <div class="pair powered d-flex flex-column align-items-center"><svg class="s12"><use href="#power"/></svg><span>同步</span></div>
  <svg width="38" height="34" viewBox="0 0 38 34"><path d="M1 4h1v9H1zM10 4v9h5v-3h1V7h-1V4zM4 8h2v1H4zM7 8h2v1H7zM20 8h2v1h-2zM24 4h3l2 3 1-3h2v9h-2l-1-3-2 3h-3zM34 8h3v1h-3z"/><path d="M1 21h5q3 0 5 4t5 3" fill="none" stroke="currentColor" stroke-width="2"/><path d="M2 28h6" stroke="currentColor" stroke-dasharray="1 1"/><path d="M22 23h3l4-3v10l-4-3h-3zM32 24h1v2h-1zM35 20h1v10h-1z" opacity=".35"/></svg>
  <button class="tkey key-on" aria-label="展开"><svg class="s12" viewBox="0 0 12 12"><path d="M2 4l4 4 4-4" fill="none" stroke="currentColor" stroke-width="2"/></svg></button>
 </div>
 <div class="screen d-flex justify-content-center align-items-start">
  <div class="text-center"><div class="clock">00111.04.04.37</div><div class="beats d-flex justify-content-center align-items-center gap-1">小节 <svg class="s8 c-dim"><use href="#caret"/></svg></div></div>
  <button aria-label="返回"><svg class="s20" viewBox="0 0 20 20"><path d="M4 5h1v11H4zM15 4v13l-9-6.500z"/></svg></button>
  <button aria-label="停止"><svg class="s20" viewBox="0 0 20 20"><rect width="20" height="20" rx="2" fill="#bfc0c2"/></svg></button>
  <button aria-label="播放"><svg class="s20" viewBox="0 0 20 20"><path d="M2 0l18 10L2 20z" fill="#a0f860"/></svg></button>
  <button aria-label="录音"><svg class="s20" viewBox="0 0 20 20"><circle cx="10" cy="10" r="10" fill="#bfc0c2"/></svg></button>
  <button aria-label="循环"><svg width="34" height="22" viewBox="0 0 34 22"><path d="M11 19.500H9Q2 19 2 10.500T9 2h16q7 0 7 8.500T25 19.500h-4M11 21l4-9M19 21l4-9" fill="none" stroke="currentColor" stroke-width="2.600"/></svg></button>
  <div class="loc d-flex"><span class="c-dim">L<br>R</span><svg width="12" height="24" viewBox="0 0 12 24" class="me-1"><path d="M4 6h4v16H4" fill="none" stroke="#85888c"/></svg><b>00001.01.01.00<br>00001.01.01.00</b></div>
 </div>
 <div class="well song">
  <div class="pair"><b>4 / 4</b><span>节拍</span></div><div class="pair"><b>-</b><span>调性</span></div><div class="pair"><b>0</b><span>移调</span></div>
  <div class="d-flex"><svg width="10" height="18" viewBox="0 0 10 18"><path d="M7 0h1v14q-1 3-4 3T2 13q2-2 5-1z"/></svg><div class="pair"><b class="tempo">= 120.00</b><span>速度</span></div></div>
  <svg class="s20 mt-2"><use href="#metro"/></svg>
 </div>
 <div class="well out gl-10"><div class="bar1"><i style="width:62%"></i></div><div class="bar1"><i style="width:60%"></i></div><div class="d-flex align-items-center justify-content-between pt-1"><input class="vol" type="range" value="74" aria-label="主音量"><svg class="s18 c-sky"><use href="#stereo"/></svg></div></div>
 <div class="well views gl-38"><button class="tkey" aria-label="编辑"><svg class="s18"><use href="#pencil"/></svg></button><button class="tkey" aria-label="通道"><svg class="s18" viewBox="0 0 18 18"><path d="M3 1h1v16H3zM1 5h5v4H1zM8 7h3v5H8zM12 6h3v7h-3zM16 6h1v7h-1z"/></svg></button><button class="tkey key-on" aria-label="混音"><svg class="s20" viewBox="0 0 20 20"><path d="M3 1h1.500v18H3zM9.300 1h1.500v18H9.300zM15.500 1H17v18h-1.500zM1 6h5.500v3H1zM7.300 11h5.500v3H7.300zM13.500 5H19v3h-5.500z"/></svg></button><button class="tkey key-on" aria-label="浏览"><svg class="s20" viewBox="0 0 20 20"><path d="M1.500 16V4q0-2 2-2H8l2 3h6.500q2 0 2 2v9q0 2-2 2h-13q-2 0-2-2z" fill="none" stroke="currentColor" stroke-width="2"/></svg></button></div>
</footer>
</div>
<script>
// Ruler: samples on the upper scale, seconds on the lower one.
(function(){
  var out='';
  function r(x,y,w,h,c){out+='<rect x="'+x+'" y="'+y+'" width="'+w+'" height="'+h+'" fill="'+c+'"/>';}
  r(0,30,'100%',1,'#17181a'); r(0,58,'100%',1,'#17181a'); r(0,59,'100%',21,'#26272a');
  for(var i=-7;i<=16;i++){var x=Math.round(166+i*22.68),m=i%10===0;r(x,m?25:27,1,m?6:4,m?'#777':'#dcdcdc');if(m){r(x,59,1,21,'#3d4044');out+='<text x="'+x+'" y="16">'+(97+i/10)+'00000</text>';}}
  for(var k=0;k<=55;k++){var X=k*10+1,M=k%10===7;r(X,M?53:55,1,M?5:4,M?'#777':'#dcdcdc');if(M)out+='<text x="'+X+'" y="46">3:'+(39+(k-7)/10)+'</text>';}
  r(365,0,1,80,'#b4b6b8');
  document.getElementById('timeline').innerHTML=out;
})();
</script>
<script src="https://cdn.jsdelivr.net/npm/bootstrap@5.3.0/dist/js/bootstrap.bundle.min.js"></script>
</body>
</html>
